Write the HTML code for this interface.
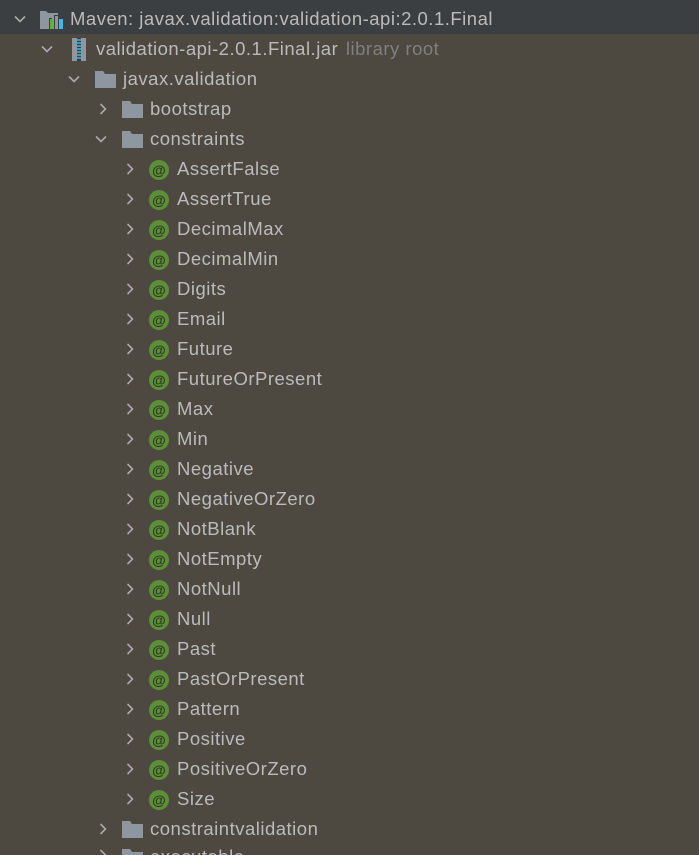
<!DOCTYPE html>
<html style="overflow:hidden;height:855px"><head><meta charset="utf-8"><style>
body{margin:0;width:699px;height:855px;overflow:hidden;background:#4d4940;font-family:"Liberation Sans",sans-serif;font-size:18.5px;color:#bbbbbb;position:relative}
.top{position:absolute;left:0;top:0;width:699px;height:34px;background:#3c3f41}
.r{position:absolute;height:30px;line-height:30px;white-space:nowrap;letter-spacing:0.5px}
.a{position:absolute;width:12px;height:12px}
svg{display:block}
.at{position:absolute;width:20px;height:20px;border-radius:50%;background:#5c8f37;color:#2e3b22;font-size:14px;line-height:20px;text-align:center;font-weight:bold}
.f{position:absolute;width:21px;height:17px}
</style></head><body>
<div class="top"></div>
<svg class="a" style="left:14px;top:13px" viewBox="0 0 12 12"><path d="M1 3.5L6 8.5L11 3.5" fill="none" stroke="#aaa" stroke-width="1.6"/></svg>
<svg style="position:absolute;left:40px;top:10px" width="24" height="20" viewBox="0 0 24 20"><path d="M0 1h6l2 2h10v16H0z" fill="#8e979f"/><rect x="9" y="8" width="3" height="11" fill="#3c3f41"/><rect x="10" y="9" width="3" height="10" fill="#5eb13f"/><rect x="14" y="5" width="4" height="14" fill="#3c3f41"/><rect x="15" y="6" width="3" height="13" fill="#8e979f"/><rect x="19" y="9" width="4" height="10" fill="#40b6e0"/></svg>
<div class="r" style="left:70px;top:4px">Maven: javax.validation:validation-api:2.0.1.Final</div>
<svg class="a" style="left:41px;top:43px" viewBox="0 0 12 12"><path d="M1 3.5L6 8.5L11 3.5" fill="none" stroke="#aaa" stroke-width="1.6"/></svg>
<svg style="position:absolute;left:72px;top:38px" width="14" height="23" viewBox="0 0 14 23"><rect x="0" y="0" width="14" height="23" fill="#8e979f"/><rect x="5" y="0" width="4" height="23" fill="#3c3f41"/><path d="M5 2h4M5 5h4M5 8h4M5 11h4M5 14h4M5 17h4M5 20h4" stroke="#40b6e0" stroke-width="1.5"/></svg>
<div class="r" style="left:96px;top:34px">validation-api-2.0.1.Final.jar <span style="color:#7f7f7f;margin-left:2px">library root</span></div>
<svg class="a" style="left:68px;top:73px" viewBox="0 0 12 12"><path d="M1 3.5L6 8.5L11 3.5" fill="none" stroke="#aaa" stroke-width="1.6"/></svg>
<svg class="f" style="left:95px;top:71px" viewBox="0 0 21 17"><path d="M0 0h8l2 3h11v14H0z" fill="#8e979f"/></svg>
<div class="r" style="left:123px;top:64px">javax.validation</div>
<svg class="a" style="left:97px;top:103px" viewBox="0 0 12 12"><path d="M3.5 1L8.5 6L3.5 11" fill="none" stroke="#aaa" stroke-width="1.6"/></svg>
<svg class="f" style="left:122px;top:101px" viewBox="0 0 21 17"><path d="M0 0h8l2 3h11v14H0z" fill="#8e979f"/></svg>
<div class="r" style="left:150px;top:94px">bootstrap</div>
<svg class="a" style="left:95px;top:133px" viewBox="0 0 12 12"><path d="M1 3.5L6 8.5L11 3.5" fill="none" stroke="#aaa" stroke-width="1.6"/></svg>
<svg class="f" style="left:122px;top:131px" viewBox="0 0 21 17"><path d="M0 0h8l2 3h11v14H0z" fill="#8e979f"/></svg>
<div class="r" style="left:150px;top:124px">constraints</div>

<svg class="a" style="left:124px;top:163px" viewBox="0 0 12 12"><path d="M3.5 1L8.5 6L3.5 11" fill="none" stroke="#aaa" stroke-width="1.6"/></svg><div class="at" style="left:149px;top:160px">@</div><div class="r" style="left:177px;top:154px">AssertFalse</div>
<svg class="a" style="left:124px;top:193px" viewBox="0 0 12 12"><path d="M3.5 1L8.5 6L3.5 11" fill="none" stroke="#aaa" stroke-width="1.6"/></svg><div class="at" style="left:149px;top:190px">@</div><div class="r" style="left:177px;top:184px">AssertTrue</div>
<svg class="a" style="left:124px;top:223px" viewBox="0 0 12 12"><path d="M3.5 1L8.5 6L3.5 11" fill="none" stroke="#aaa" stroke-width="1.6"/></svg><div class="at" style="left:149px;top:220px">@</div><div class="r" style="left:177px;top:214px">DecimalMax</div>
<svg class="a" style="left:124px;top:253px" viewBox="0 0 12 12"><path d="M3.5 1L8.5 6L3.5 11" fill="none" stroke="#aaa" stroke-width="1.6"/></svg><div class="at" style="left:149px;top:250px">@</div><div class="r" style="left:177px;top:244px">DecimalMin</div>
<svg class="a" style="left:124px;top:283px" viewBox="0 0 12 12"><path d="M3.5 1L8.5 6L3.5 11" fill="none" stroke="#aaa" stroke-width="1.6"/></svg><div class="at" style="left:149px;top:280px">@</div><div class="r" style="left:177px;top:274px">Digits</div>
<svg class="a" style="left:124px;top:313px" viewBox="0 0 12 12"><path d="M3.5 1L8.5 6L3.5 11" fill="none" stroke="#aaa" stroke-width="1.6"/></svg><div class="at" style="left:149px;top:310px">@</div><div class="r" style="left:177px;top:304px">Email</div>
<svg class="a" style="left:124px;top:343px" viewBox="0 0 12 12"><path d="M3.5 1L8.5 6L3.5 11" fill="none" stroke="#aaa" stroke-width="1.6"/></svg><div class="at" style="left:149px;top:340px">@</div><div class="r" style="left:177px;top:334px">Future</div>
<svg class="a" style="left:124px;top:373px" viewBox="0 0 12 12"><path d="M3.5 1L8.5 6L3.5 11" fill="none" stroke="#aaa" stroke-width="1.6"/></svg><div class="at" style="left:149px;top:370px">@</div><div class="r" style="left:177px;top:364px">FutureOrPresent</div>
<svg class="a" style="left:124px;top:403px" viewBox="0 0 12 12"><path d="M3.5 1L8.5 6L3.5 11" fill="none" stroke="#aaa" stroke-width="1.6"/></svg><div class="at" style="left:149px;top:400px">@</div><div class="r" style="left:177px;top:394px">Max</div>
<svg class="a" style="left:124px;top:433px" viewBox="0 0 12 12"><path d="M3.5 1L8.5 6L3.5 11" fill="none" stroke="#aaa" stroke-width="1.6"/></svg><div class="at" style="left:149px;top:430px">@</div><div class="r" style="left:177px;top:424px">Min</div>
<svg class="a" style="left:124px;top:463px" viewBox="0 0 12 12"><path d="M3.5 1L8.5 6L3.5 11" fill="none" stroke="#aaa" stroke-width="1.6"/></svg><div class="at" style="left:149px;top:460px">@</div><div class="r" style="left:177px;top:454px">Negative</div>
<svg class="a" style="left:124px;top:493px" viewBox="0 0 12 12"><path d="M3.5 1L8.5 6L3.5 11" fill="none" stroke="#aaa" stroke-width="1.6"/></svg><div class="at" style="left:149px;top:490px">@</div><div class="r" style="left:177px;top:484px">NegativeOrZero</div>
<svg class="a" style="left:124px;top:523px" viewBox="0 0 12 12"><path d="M3.5 1L8.5 6L3.5 11" fill="none" stroke="#aaa" stroke-width="1.6"/></svg><div class="at" style="left:149px;top:520px">@</div><div class="r" style="left:177px;top:514px">NotBlank</div>
<svg class="a" style="left:124px;top:553px" viewBox="0 0 12 12"><path d="M3.5 1L8.5 6L3.5 11" fill="none" stroke="#aaa" stroke-width="1.6"/></svg><div class="at" style="left:149px;top:550px">@</div><div class="r" style="left:177px;top:544px">NotEmpty</div>
<svg class="a" style="left:124px;top:583px" viewBox="0 0 12 12"><path d="M3.5 1L8.5 6L3.5 11" fill="none" stroke="#aaa" stroke-width="1.6"/></svg><div class="at" style="left:149px;top:580px">@</div><div class="r" style="left:177px;top:574px">NotNull</div>
<svg class="a" style="left:124px;top:613px" viewBox="0 0 12 12"><path d="M3.5 1L8.5 6L3.5 11" fill="none" stroke="#aaa" stroke-width="1.6"/></svg><div class="at" style="left:149px;top:610px">@</div><div class="r" style="left:177px;top:604px">Null</div>
<svg class="a" style="left:124px;top:643px" viewBox="0 0 12 12"><path d="M3.5 1L8.5 6L3.5 11" fill="none" stroke="#aaa" stroke-width="1.6"/></svg><div class="at" style="left:149px;top:640px">@</div><div class="r" style="left:177px;top:634px">Past</div>
<svg class="a" style="left:124px;top:673px" viewBox="0 0 12 12"><path d="M3.5 1L8.5 6L3.5 11" fill="none" stroke="#aaa" stroke-width="1.6"/></svg><div class="at" style="left:149px;top:670px">@</div><div class="r" style="left:177px;top:664px">PastOrPresent</div>
<svg class="a" style="left:124px;top:703px" viewBox="0 0 12 12"><path d="M3.5 1L8.5 6L3.5 11" fill="none" stroke="#aaa" stroke-width="1.6"/></svg><div class="at" style="left:149px;top:700px">@</div><div class="r" style="left:177px;top:694px">Pattern</div>
<svg class="a" style="left:124px;top:733px" viewBox="0 0 12 12"><path d="M3.5 1L8.5 6L3.5 11" fill="none" stroke="#aaa" stroke-width="1.6"/></svg><div class="at" style="left:149px;top:730px">@</div><div class="r" style="left:177px;top:724px">Positive</div>
<svg class="a" style="left:124px;top:763px" viewBox="0 0 12 12"><path d="M3.5 1L8.5 6L3.5 11" fill="none" stroke="#aaa" stroke-width="1.6"/></svg><div class="at" style="left:149px;top:760px">@</div><div class="r" style="left:177px;top:754px">PositiveOrZero</div>
<svg class="a" style="left:124px;top:793px" viewBox="0 0 12 12"><path d="M3.5 1L8.5 6L3.5 11" fill="none" stroke="#aaa" stroke-width="1.6"/></svg><div class="at" style="left:149px;top:790px">@</div><div class="r" style="left:177px;top:784px">Size</div>

<svg class="a" style="left:97px;top:823px" viewBox="0 0 12 12"><path d="M3.5 1L8.5 6L3.5 11" fill="none" stroke="#aaa" stroke-width="1.6"/></svg>
<svg class="f" style="left:122px;top:821px" viewBox="0 0 21 17"><path d="M0 0h8l2 3h11v14H0z" fill="#8e979f"/></svg>
<div class="r" style="left:150px;top:814px">constraintvalidation</div>

<svg class="a" style="left:97px;top:849px" viewBox="0 0 12 12"><path d="M3.5 1L8.5 6L3.5 11" fill="none" stroke="#aaa" stroke-width="1.6"/></svg>
<svg class="f" style="left:122px;top:849px" viewBox="0 0 21 17"><path d="M0 0h8l2 3h11v14H0z" fill="#8e979f"/></svg>
<div class="r" style="left:150px;top:842px;height:13px;overflow:hidden">executable</div>
</body></html>
